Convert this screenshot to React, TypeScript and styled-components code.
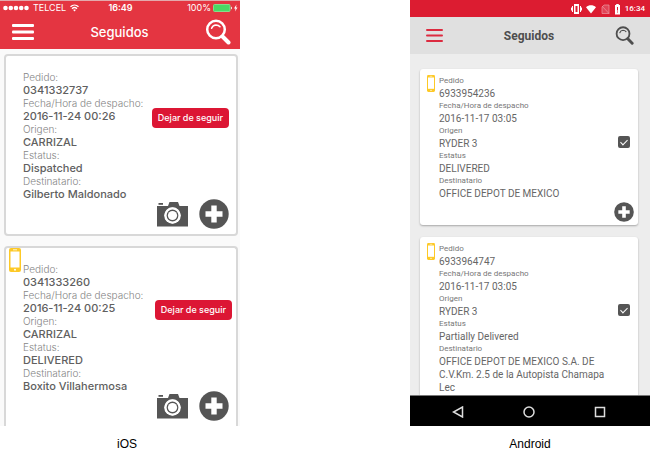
import React from "react";
import styled, { createGlobalStyle } from "styled-components";

const GlobalStyle = createGlobalStyle`
  *, *::before, *::after { box-sizing: border-box; }
  body { margin: 0; background: #fff; }
  button { border: 0; padding: 0; background: none; font: inherit; color: inherit; cursor: pointer; }
  svg { display: block; }
  h1, dl, dd, figure { margin: 0; }
`;

const Comparison = styled.main`
  display: grid;
  grid-template-columns: 254fr 240fr;
  column-gap: 24%;
  align-items: start;
`;

const Figure = styled.figure`
  min-width: 0;
`;

const Caption = styled.figcaption`
  padding-top: 11px;
  font: 12px/15px "Liberation Sans", Arial, sans-serif;
  color: #000;
  text-align: center;
`;

/* ---------- iOS ---------- */

const IosScreen = styled.section`
  margin-right: 14px;
  background: #fafafa;
  font-family: Inter, "Liberation Sans", sans-serif;
  border-top: 1px solid #e3a9ac;
`;

const IosTop = styled.header`
  background: #e43541;
  color: #fff;
`;

const IosStatus = styled.div`
  display: grid;
  grid-template-columns: 1fr auto 1fr;
  align-items: center;
  height: 14px;
  padding: 0 2px 0 3px;
  font-size: 9px;
  line-height: 14px;
`;

const StatusGroup = styled.div<{ $end?: boolean }>`
  display: flex;
  align-items: center;
  justify-content: ${(p) => (p.$end ? "flex-end" : "flex-start")};
  gap: ${(p) => (p.$end ? 2 : 4)}px;
`;

const Clock = styled.time`
  font-size: 9px;
  font-weight: 600;
`;

const IosNav = styled.div`
  display: flex;
  align-items: center;
  justify-content: space-between;
  height: 34px;
  padding: 0 9px 0 12px;
`;

const IosTitle = styled.h1`
  font-size: 13px;
  line-height: 16px;
  font-weight: 500;
`;

const IosList = styled.div`
  display: flex;
  flex-direction: column;
  gap: 10px;
  padding: 5px 2px 0 4px;
`;

const IosCard = styled.article<{ $cut?: boolean }>`
  position: relative;
  display: flex;
  justify-content: space-between;
  min-height: ${(p) => (p.$cut ? 180 : 182)}px;
  padding: 15px 7px 5px 17px;
  background: #fff;
  border: 2px solid #d8d8d8;
  border-bottom-width: ${(p) => (p.$cut ? 0 : 2)}px;
  border-radius: ${(p) => (p.$cut ? "4px 4px 0 0" : "4px")};
`;

const IosDetails = styled.dl`
  flex: 1;
  min-width: 0;
  line-height: 13px;
  white-space: nowrap;
`;

const IosLabel = styled.dt`
  font-size: 10px;
  color: #858585;
  font-weight: 300;
`;

const IosValue = styled.dd`
  font-size: 11px;
  color: #606060;
  font-weight: 500;
`;

const IosSide = styled.div`
  display: flex;
  flex-direction: column;
  align-items: flex-end;
  justify-content: space-between;
  padding-top: 37px;
`;

const FollowButton = styled.button<{ $outer?: boolean }>`
  height: 20px;
  padding: 0 6px;
  margin-right: ${(p) => (p.$outer ? -3 : 0)}px;
  border-radius: 4px;
  background: #dc1634;
  color: #fff;
  font-size: 9px;
  font-weight: 500;
  line-height: 20px;
  white-space: nowrap;
`;

const Actions = styled.div`
  display: flex;
  align-items: center;
  gap: 11px;
`;

const IosBadge = styled.span`
  position: absolute;
  top: 0;
  left: 3px;
`;

/* ---------- Android ---------- */

const AndroidScreen = styled.section`
  background: #ededed;
  font-family: Roboto, "Liberation Sans", sans-serif;
`;

const AndroidStatus = styled.div`
  display: flex;
  align-items: center;
  justify-content: flex-end;
  gap: 4px;
  height: 17px;
  padding-right: 5px;
  background: #dc1c31;
  color: #fff;
  font-size: 8px;
  font-weight: 500;
  line-height: 17px;
`;

const AndroidNav = styled.header`
  display: flex;
  align-items: center;
  justify-content: space-between;
  height: 37px;
  padding: 0 16px;
  background: #e0e0e0;
  color: #4e4e4e;
`;

const AndroidTitle = styled.h1`
  font-size: 12px;
  line-height: 16px;
  font-weight: 700;
`;

const AndroidList = styled.div`
  display: flex;
  flex-direction: column;
  gap: 12px;
  padding: 15px 12px 0 10px;
`;

const AndroidCard = styled.article<{ $cut?: boolean }>`
  display: grid;
  grid-template-columns: 12px 1fr 20px;
  min-height: ${(p) => (p.$cut ? 158 : 156)}px;
  padding: 6px 4px ${(p) => (p.$cut ? 1 : 3)}px 7px;
  background: #fff;
  border-radius: ${(p) => (p.$cut ? "3px 3px 0 0" : "3px")};
  box-shadow: 0 1px 2px rgba(0, 0, 0, 0.3);
  clip-path: ${(p) => (p.$cut ? "inset(-3px -3px 0 -3px)" : "none")};
`;

const AndroidDetails = styled.dl`
  min-width: 0;
  padding-right: 4px;
`;

const AndroidLabel = styled.dt`
  font-size: 8px;
  line-height: 12px;
  color: #777;
`;

const AndroidValue = styled.dd`
  font-size: 10px;
  line-height: 13px;
  color: #666;
`;

const AndroidSide = styled.div`
  display: flex;
  flex-direction: column;
  align-items: center;
  justify-content: space-between;
  padding-top: 61px;
`;

const Check = styled.input`
  appearance: none;
  display: block;
  width: 12px;
  height: 12px;
  margin: 0;
  border: 2px solid #555;
  border-radius: 2px;
  &:checked { background: #555; }
  &:checked::after {
    content: "";
    display: block;
    width: 4px;
    height: 7px;
    margin-left: 2px;
    border: solid #fff;
    border-width: 0 1px 1px 0;
    transform: rotate(45deg);
  }
`;

const SystemBar = styled.nav`
  display: flex;
  align-items: center;
  justify-content: space-around;
  height: 31px;
  padding: 2px 15px 0 13px;
  background: #000;
  border-top: 1px solid #777;
`;

/* ---------- Icons ---------- */

const MenuIcon = ({ color, width, height, bar }: { color: string; width: number; height: number; bar: number }) => (
  <svg width={width} height={height} viewBox={`0 0 ${width} ${height}`} fill={color}>
    {[0, (height - bar) / 2, height - bar].map((y) => (
      <rect key={y} y={y} width={width} height={bar} rx="1" />
    ))}
  </svg>
);

const SearchIcon = ({ size, weight }: { size: number; weight: number }) => (
  <svg width={size} height={size} viewBox="0 0 26 26" fill="none" stroke="currentColor" strokeLinecap="round">
    <circle cx="11" cy="10.5" r="8.8" strokeWidth={weight} />
    <path d="M6.6 9.2C7.4 7 9 6 11 5.9c1.7 0 3 .6 4 1.8" strokeWidth="1.5" />
    <path d="M17.5 17.5L23.5 23.5" strokeWidth="4" />
  </svg>
);

const CameraIcon = () => (
  <svg width="31" height="26" viewBox="0 0 31 26" fill="#555">
    <path d="M0 5h11l1.500-4h8.500l1.500 4H31v20.500H0z" />
    <path d="M1.500 3.800V2h4.500v1.800z" />
    <circle cx="15.5" cy="14.5" r="8.3" fill="#fff" />
    <circle cx="15.5" cy="14.5" r="7" />
    <circle cx="15.5" cy="14.5" r="6.9" fill="none" stroke="#fff" strokeWidth="2" />
    <circle cx="15.5" cy="14.5" r="4.6" fill="#fff" />
  </svg>
);

const PlusIcon = ({ size }: { size: number }) => (
  <svg width={size} height={size} viewBox="0 0 30 30">
    <circle cx="15" cy="15" r="14.7" fill="#555" />
    <path d="M12.300 6.500h5.400v5.800h5.800v5.400h-5.800v5.800h-5.400v-5.800H6.500v-5.400h5.800z" fill="#fff" />
  </svg>
);

const PhoneIcon = ({ width, height }: { width: number; height: number }) => (
  <svg width={width} height={height} viewBox="0 0 12 24" preserveAspectRatio="none">
    <rect width="12" height="24" rx="2" fill="#fdc926" />
    <rect x="1.5" y="3.5" width="9" height="16" fill="#fff" />
    <path d="M4 1.800h4" stroke="#fff" strokeWidth=".8" />
    <circle cx="6" cy="21.7" r="1" fill="#fff" />
  </svg>
);

const SignalDots = () => (
  <svg width="26" height="6" viewBox="0 0 26 6" fill="#fff">
    {[2.5, 7.8, 13, 18.2, 23.5].map((x) => (
      <circle key={x} cx={x} cy="3" r="2.3" />
    ))}
  </svg>
);

const WifiIcon = () => (
  <svg width="9" height="8" viewBox="0 0 9 8" fill="none" stroke="#fff" strokeWidth="1.3">
    <path d="M.5 2.800C2.800.5 6.200.5 8.500 2.800M2 4.700c1.500-1.400 3.500-1.400 5 0" />
    <path d="M3.200 6l1.300 1.500L5.800 6C5 5.400 4 5.400 3.200 6z" fill="#fff" stroke="none" />
  </svg>
);

const BatteryIcon = () => (
  <svg width="25" height="8" viewBox="0 0 25 8">
    <rect x=".5" y=".5" width="16.5" height="7" rx="1" fill="#4bd964" stroke="#86dc8c" />
    <path d="M18 2.500q2 1.500 0 3z" fill="#fff" />
    <path d="M23.500.5L21 4.500h1.500L22 7.500l2.500-4H23z" fill="#fff" />
  </svg>
);

const AndroidStatusIcons = () => (
  <svg width="50" height="12" viewBox="0 0 50 12" fill="#fff">
    <path d="M3 1h5v10H3zM4.500 3v6h2V3z" fillRule="evenodd" />
    <path d="M1.500 3v6M9.500 3v6M0.500 4.500v3M10.500 4.500v3" stroke="#fff" strokeWidth="1" />
    <path d="M15 4.200c3-2.600 7-2.600 10 0L20 10.500z" />
    <path d="M38 2v8.500h-7V4l2-2zM31 3l7 7.500" fill="#e98390" fillOpacity=".4" stroke="#ec98a2" strokeWidth=".7" />
    <path d="M44 2h1.200V1h2.600v1H49v9.500h-5z" />
    <path d="M46 4h1v3.500h-1zM46 8.500h1v1h-1z" fill="#dc1c31" />
  </svg>
);

/* ---------- Data ---------- */

type Field = [label: string, value: string];
type Order = { fields: Field[]; phone?: boolean; cut?: boolean };

const order = (id: string, date: string, origin: string, status: string, to: string): Field[] => [
  ["Pedido", id],
  ["Fecha/Hora de despacho", date],
  ["Origen", origin],
  ["Estatus", status],
  ["Destinatario", to],
];

const iosOrders: Order[] = [
  { fields: order("0341332737", "2016-11-24 00:26", "CARRIZAL", "Dispatched", "Gilberto Maldonado") },
  {
    fields: order("0341333260", "2016-11-24 00:25", "CARRIZAL", "DELIVERED", "Boxito Villahermosa"),
    phone: true,
    cut: true,
  },
];

const androidOrders: Order[] = [
  { fields: order("6933954236", "2016-11-17 03:05", "RYDER 3", "DELIVERED", "OFFICE DEPOT DE MEXICO") },
  {
    fields: order(
      "6933964747",
      "2016-11-17 03:05",
      "RYDER 3",
      "Partially Delivered",
      "OFFICE DEPOT DE MEXICO S.A. DE C.V.Km. 2.5 de la Autopista Chamapa Lec"
    ),
    cut: true,
  },
];

function IosPhone() {
  return (
    <IosScreen aria-label="iOS">
      <IosTop>
        <IosStatus>
          <StatusGroup>
            <SignalDots />
            <span>TELCEL</span>
            <WifiIcon />
          </StatusGroup>
          <Clock>16:49</Clock>
          <StatusGroup $end>
            <span>100%</span>
            <BatteryIcon />
          </StatusGroup>
        </IosStatus>
        <IosNav>
          <button aria-label="Menú">
            <MenuIcon color="#fff" width={22} height={16} bar={3} />
          </button>
          <IosTitle>Seguidos</IosTitle>
          <button aria-label="Buscar">
            <SearchIcon size={26} weight={2.5} />
          </button>
        </IosNav>
      </IosTop>
      <IosList>
        {iosOrders.map(({ fields, phone, cut }) => (
          <IosCard key={fields[0][1]} $cut={cut}>
            {phone && (
              <IosBadge>
                <PhoneIcon width={12} height={24} />
              </IosBadge>
            )}
            <IosDetails>
              {fields.map(([label, value]) => (
                <React.Fragment key={label}>
                  <IosLabel>{label}:</IosLabel>
                  <IosValue>{value}</IosValue>
                </React.Fragment>
              ))}
            </IosDetails>
            <IosSide>
              <FollowButton $outer={cut}>Dejar de seguir</FollowButton>
              <Actions>
                <button aria-label="Tomar foto">
                  <CameraIcon />
                </button>
                <button aria-label="Más">
                  <PlusIcon size={30} />
                </button>
              </Actions>
            </IosSide>
          </IosCard>
        ))}
      </IosList>
    </IosScreen>
  );
}

function AndroidPhone() {
  return (
    <AndroidScreen aria-label="Android">
      <AndroidStatus>
        <AndroidStatusIcons />
        <time>16:34</time>
      </AndroidStatus>
      <AndroidNav>
        <button aria-label="Menú">
          <MenuIcon color="#dc2b40" width={17} height={13} bar={2} />
        </button>
        <AndroidTitle>Seguidos</AndroidTitle>
        <button aria-label="Buscar">
          <SearchIcon size={19} weight={2.5} />
        </button>
      </AndroidNav>
      <AndroidList>
        {androidOrders.map(({ fields, cut }) => (
          <AndroidCard key={fields[0][1]} $cut={cut}>
            <PhoneIcon width={8} height={17} />
            <AndroidDetails>
              {fields.map(([label, value]) => (
                <React.Fragment key={label}>
                  <AndroidLabel>{label}</AndroidLabel>
                  <AndroidValue>{value}</AndroidValue>
                </React.Fragment>
              ))}
            </AndroidDetails>
            <AndroidSide>
              <Check type="checkbox" defaultChecked aria-label={`Seguir pedido ${fields[0][1]}`} />
              {!cut && (
                <button aria-label="Más">
                  <PlusIcon size={20} />
                </button>
              )}
            </AndroidSide>
          </AndroidCard>
        ))}
      </AndroidList>
      <SystemBar>
        <button aria-label="Atrás">
          <svg width="12" height="12" viewBox="0 0 12 12" fill="none" stroke="#ddd" strokeWidth="1.5">
            <path d="M10.500 1v10L1.500 6z" />
          </svg>
        </button>
        <button aria-label="Inicio">
          <svg width="12" height="12" viewBox="0 0 12 12" fill="none" stroke="#ddd" strokeWidth="1.5">
            <circle cx="6" cy="6" r="5" />
          </svg>
        </button>
        <button aria-label="Recientes">
          <svg width="12" height="12" viewBox="0 0 12 12" fill="none" stroke="#ddd" strokeWidth="1.5">
            <rect x="1.5" y="1.5" width="9" height="9" />
          </svg>
        </button>
      </SystemBar>
    </AndroidScreen>
  );
}

export default function App() {
  return (
    <>
      <GlobalStyle />
      <Comparison>
        <Figure>
          <IosPhone />
          <Caption>iOS</Caption>
        </Figure>
        <Figure>
          <AndroidPhone />
          <Caption>Android</Caption>
        </Figure>
      </Comparison>
    </>
  );
}
